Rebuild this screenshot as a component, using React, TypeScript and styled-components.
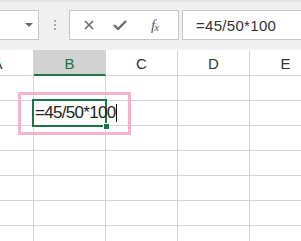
import styled, { createGlobalStyle } from "styled-components";

const GlobalStyle = createGlobalStyle`
  body {
    margin: 0;
    background: #ffffff;
    overflow: hidden;
  }
`;

const Frame = styled.div`
  position: relative;
  width: 301px;
  height: 241px;
  overflow: hidden;
  font-family: "Liberation Sans", Arial, sans-serif;
`;

const Toolbar = styled.div`
  display: flex;
  align-items: flex-start;
  height: 50px;
  box-sizing: border-box;
  background: #f0f0f0;
  border-top: 2px solid #e4e4e4;
  padding-top: 8px;
`;

const Box = styled.div`
  height: 30px;
  box-sizing: border-box;
  background: #ffffff;
  border: 1px solid #c6c6c6;
  display: flex;
  align-items: center;
`;

const NameBox = styled(Box)`
  width: 60px;
  margin-left: -21px;
  justify-content: flex-end;
  padding-right: 5px;
`;

const Caret = styled.span`
  width: 0;
  height: 0;
  border-left: 4px solid transparent;
  border-right: 4px solid transparent;
  border-top: 4px solid #6a6a6a;
`;

const Grip = styled.div`
  display: flex;
  flex-direction: column;
  gap: 2px;
  margin: 10px 13px 0 15px;
  span {
    width: 2px;
    height: 2px;
    background: #a8a8a8;
  }
`;

const ActionBox = styled(Box)`
  width: 110px;
  padding-left: 14px;
  gap: 19px;
`;

const Fx = styled.span`
  font-family: "Liberation Serif", "Times New Roman", serif;
  font-style: italic;
  font-size: 15px;
  color: #5a5a5a;
  margin-left: 5px;
  letter-spacing: -1px;
  sub {
    font-size: 11px;
    vertical-align: -1px;
  }
`;

const FormulaBox = styled(Box)`
  flex: 1;
  margin-left: 3px;
  margin-right: -10px;
  padding-left: 13px;
  font-size: 15px;
  letter-spacing: 0.3px;
  color: #333333;
`;

const Sheet = styled.div`
  display: grid;
  grid-template-columns: repeat(5, 72px);
  margin-left: -38px;
`;

const Header = styled.div<{ $active?: boolean }>`
  height: 26px;
  box-sizing: border-box;
  border-right: 1px solid #d4d4d4;
  border-bottom: ${(p) => (p.$active ? "2px solid #217346" : "1px solid #d4d4d4")};
  background: ${(p) => (p.$active ? "#d2d2d2" : "#ffffff")};
  color: ${(p) => (p.$active ? "#217346" : "#333333")};
  font-size: 15px;
  display: flex;
  align-items: center;
  justify-content: center;
  padding-top: 2px;
`;

const Cell = styled.div`
  position: relative;
  height: 25px;
  box-sizing: border-box;
  border-right: 1px solid #d4d4d4;
  border-bottom: 1px solid #d4d4d4;
`;

const EditCell = styled(Cell)`
  z-index: 2;
`;

const Outline = styled.div`
  position: absolute;
  inset: -2px;
  border: 2px solid #217346;
`;

const Handle = styled.div`
  position: absolute;
  right: -4px;
  bottom: -4px;
  width: 5px;
  height: 5px;
  background: #217346;
  box-shadow: 0 0 0 1px #ffffff;
`;

const Entry = styled.div`
  position: absolute;
  left: 1px;
  top: 1px;
  display: flex;
  align-items: center;
  height: 22px;
  white-space: nowrap;
  font-size: 17px;
  letter-spacing: -0.7px;
  color: #222222;
`;

const Cursor = styled.span`
  width: 1px;
  height: 18px;
  background: #000000;
  margin-left: 1px;
`;

const Highlight = styled.div`
  position: absolute;
  left: 18px;
  top: 92px;
  width: 113px;
  height: 43px;
  box-sizing: border-box;
  border: 3px solid #f5b4cc;
  z-index: 3;
  pointer-events: none;
`;

const columns = ["A", "B", "C", "D", "E"];

const CrossIcon = () => (
  <svg width="10" height="10" viewBox="0 0 10 10">
    <path d="M1 1 L9 9 M9 1 L1 9" stroke="#6a6a6a" strokeWidth="1.6" fill="none" />
  </svg>
);

const CheckIcon = () => (
  <svg width="14" height="10" viewBox="0 0 14 10">
    <path d="M1 5 L5 9 L13 1" stroke="#6a6a6a" strokeWidth="2.4" fill="none" />
  </svg>
);

export default function App() {
  const rows = [0, 1, 2, 3, 4, 5, 6];
  return (
    <Frame>
      <GlobalStyle />
      <Toolbar>
        <NameBox>
          <Caret />
        </NameBox>
        <Grip>
          <span />
          <span />
          <span />
        </Grip>
        <ActionBox>
          <CrossIcon />
          <CheckIcon />
          <Fx>
            f<sub>x</sub>
          </Fx>
        </ActionBox>
        <FormulaBox>=45/50*100</FormulaBox>
      </Toolbar>
      <Sheet>
        {columns.map((c) => (
          <Header key={c} $active={c === "B"}>
            {c}
          </Header>
        ))}
        {rows.map((r) =>
          columns.map((c) =>
            r === 1 && c === "B" ? (
              <EditCell key={c + r}>
                <Outline>
                  <Handle />
                </Outline>
                <Entry>
                  =45/50*100
                  <Cursor />
                </Entry>
              </EditCell>
            ) : (
              <Cell key={c + r} />
            )
          )
        )}
      </Sheet>
      <Highlight />
    </Frame>
  );
}
